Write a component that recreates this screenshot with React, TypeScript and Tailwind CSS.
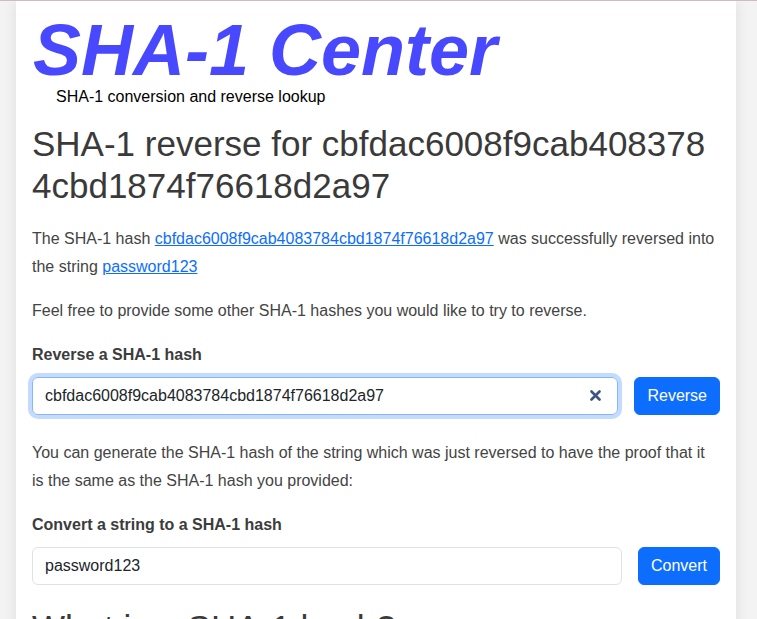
import React from "react";

const font = { fontFamily: '"Liberation Sans", Arial, sans-serif' };

function ClearIcon() {
  return (
    <svg width="11" height="11" viewBox="0 0 11 11" className="shrink-0">
      <path d="M1.5 1.5 L9.5 9.5 M9.5 1.5 L1.5 9.5" stroke="#3d5580" strokeWidth="2.6" strokeLinecap="round" />
    </svg>
  );
}

function App() {
  const hash = "cbfdac6008f9cab4083784cbd1874f76618d2a97";
  return (
    <div style={font} className="h-[619px] overflow-hidden bg-[#f3f3f3] border-t border-[#d5b9c1]">
      <div className="ml-4 w-[720px] bg-white shadow-[0_0_14px_rgba(0,0,0,0.09)] px-4 pt-[17px] pb-10 min-h-[640px]">
        <div className="text-[72px] leading-[0.9] font-bold italic text-[#4848ff] pl-px">SHA-1 Center</div>
        <div className="mt-[6px] pl-6 text-base leading-4 text-black">SHA-1 conversion and reverse lookup</div>

        <h1 className="mt-[18px] mb-[18px] text-[35px] leading-[42px] text-[#3a3a3a] break-all">
          SHA-1 reverse for {hash}
        </h1>

        <p className="text-base leading-7 text-[#444] mb-4">
          The SHA-1 hash{" "}
          <a href="#" className="text-[#0d6efd] underline">{hash}</a>{" "}
          was successfully reversed into the string{" "}
          <a href="#" className="text-[#0d6efd] underline">password123</a>
        </p>
        <p className="text-base leading-7 text-[#444] mb-4">
          Feel free to provide some other SHA-1 hashes you would like to try to reverse.
        </p>

        <div className="mb-6">
          <div className="font-bold text-base leading-7 text-[#3c3c3c] mb-2">Reverse a SHA-1 hash</div>
          <div className="flex gap-4">
            <div className="flex-1 flex items-center h-[38px] rounded-md border border-[#86b7fe] shadow-[0_0_0_4px_rgba(13,110,253,0.25)] pl-3 pr-[16px]">
              <input
                readOnly
                value={hash}
                className="flex-1 min-w-0 bg-transparent outline-none text-base text-[#212529]"
                style={font}
              />
              <ClearIcon />
            </div>
            <button className="h-[38px] px-3 rounded-md border border-[#0d6efd] bg-[#0d6efd] text-white text-base" style={font}>
              Reverse
            </button>
          </div>
        </div>

        <p className="text-base leading-7 text-[#444] mb-4">
          You can generate the SHA-1 hash of the string which was just reversed to have the proof that it
          <br />
          is the same as the SHA-1 hash you provided:
        </p>

        <div>
          <div className="font-bold text-base leading-7 text-[#3c3c3c] mb-2">Convert a string to a SHA-1 hash</div>
          <div className="flex gap-4">
            <input
              readOnly
              value="password123"
              className="flex-1 min-w-0 h-[38px] rounded-md border border-[#dee2e6] px-3 outline-none text-base text-[#212529]"
              style={font}
            />
            <button className="h-[38px] px-3 rounded-md border border-[#0d6efd] bg-[#0d6efd] text-white text-base" style={font}>
              Convert
            </button>
          </div>
        </div>

        <h2 className="mt-[22px] text-[35px] leading-[42px] text-[#3a3a3a]">What is a SHA-1 hash?</h2>
      </div>
    </div>
  );
}

export default App;
